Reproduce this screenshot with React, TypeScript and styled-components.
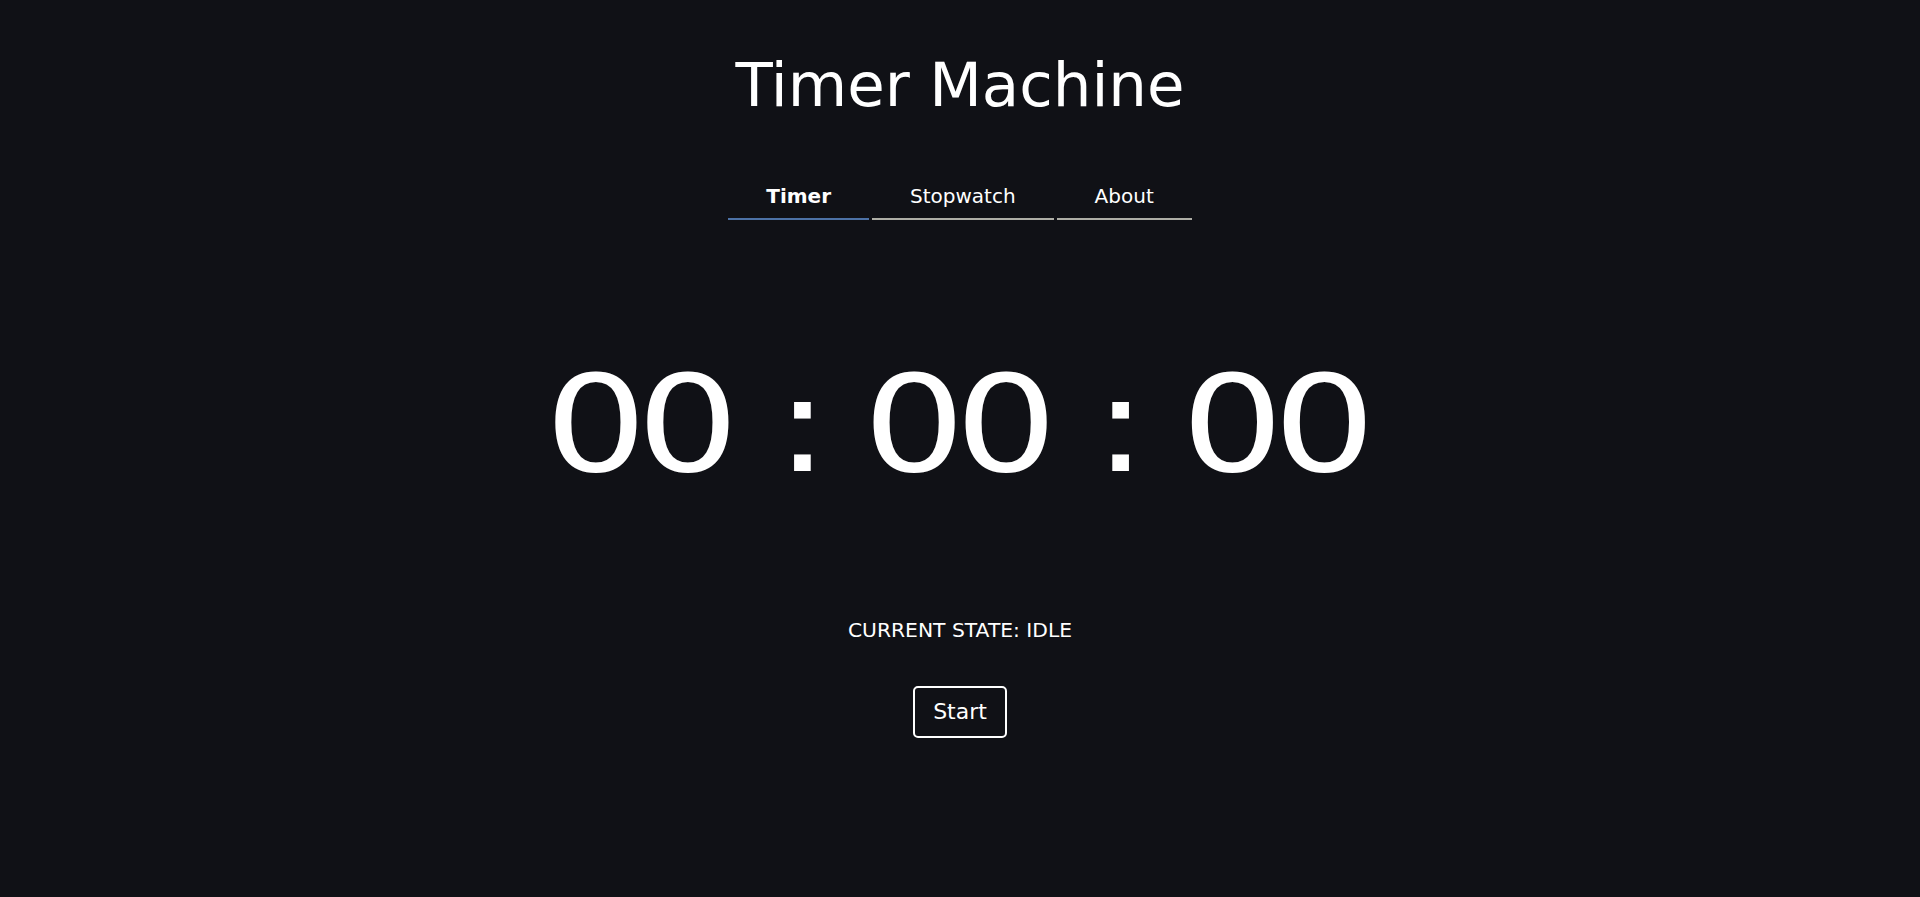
import React, { useState } from "react";
import styled, { createGlobalStyle } from "styled-components";

const GlobalStyle = createGlobalStyle`
  html, body {
    margin: 0;
    padding: 0;
    background: #101116;
  }
  body {
    font-family: "DejaVu Sans", "Noto Sans", sans-serif;
    color: #ffffff;
  }
  * { box-sizing: border-box; }
`;

const Page = styled.main`
  min-height: 897px;
  display: flex;
  flex-direction: column;
  align-items: center;
  padding-top: 54px;
`;

const Title = styled.h1`
  margin: 0;
  font-size: 61px;
  font-weight: 400;
  line-height: 1;
  color: #ffffff;
`;

const TabBar = styled.nav`
  display: flex;
  gap: 3px;
  margin-top: 61px;
`;

const Tab = styled.button<{ $active?: boolean }>`
  background: transparent;
  border: none;
  border-bottom: 2px solid ${(p) => (p.$active ? "#4d72a6" : "#aeaea6")};
  color: #ffffff;
  font-family: "DejaVu Sans", sans-serif;
  font-size: 20px;
  font-weight: ${(p) => (p.$active ? 700 : 400)};
  line-height: 1;
  padding: 10px 38px 12px;
  cursor: pointer;
`;

const TimerDisplay = styled.div`
  display: flex;
  align-items: baseline;
  margin-top: 138px;
  font-size: 134px;
  line-height: 1;
  transform: scaleX(1.2);
`;

const DigitGroup = styled.span`
  letter-spacing: -8.5px;
  margin-right: 8.5px;
`;

const Colon = styled.span`
  margin: 0 28px 0 30px;
`;

const StateLabel = styled.div`
  margin-top: 128px;
  font-size: 20.3px;
  line-height: 1;
  text-transform: uppercase;
`;

const StartButton = styled.button`
  margin-top: 46px;
  background: transparent;
  color: #ffffff;
  border: 2px solid #ffffff;
  border-radius: 5px;
  font-family: "DejaVu Sans", sans-serif;
  font-size: 22px;
  line-height: 1;
  padding: 13px 18px;
  cursor: pointer;
`;

const tabs = ["Timer", "Stopwatch", "About"];

export default function App() {
  const [active, setActive] = useState("Timer");
  const parts = ["00", "00", "00"];
  return (
    <>
      <GlobalStyle />
      <Page>
        <Title>Timer Machine</Title>
        <TabBar>
          {tabs.map((t) => (
            <Tab key={t} $active={t === active} onClick={() => setActive(t)}>
              {t}
            </Tab>
          ))}
        </TabBar>
        <TimerDisplay>
          {parts.map((p, i) => (
            <React.Fragment key={i}>
              {i > 0 && <Colon>:</Colon>}
              <DigitGroup>{p}</DigitGroup>
            </React.Fragment>
          ))}
        </TimerDisplay>
        <StateLabel>Current state: idle</StateLabel>
        <StartButton>Start</StartButton>
      </Page>
    </>
  );
}
